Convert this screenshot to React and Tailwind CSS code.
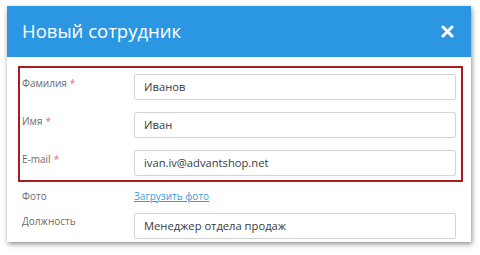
import React from "react";

const font = { fontFamily: '"Open Sans", "Noto Sans", sans-serif' };

function Row({ label, value, req }) {
  return (
    <div className="flex items-start h-[26px]">
      <div className="w-[114px] pl-[2px] pt-[1px] text-[10px] text-[#6b6b6b] leading-[16px]">
        {label}
        {req && <span className="text-[#e0707a] ml-[3px]">*</span>}
      </div>
      <div className="flex-1 h-[26px] border border-[#d4d4d4] rounded-[2px] flex items-center pl-[9px] text-[11.2px] text-[#3a3a3a]">
        {value}
      </div>
    </div>
  );
}

export default function App() {
  return (
    <div className="w-[480px] h-[255px] bg-white pt-[6px] pl-[7px]" style={font}>
      <div className="w-[464px] h-[236px] bg-white shadow-[1px_2px_5px_rgba(0,0,0,0.45)] flex flex-col">
        <div className="h-[51px] bg-[#2b97e2] flex items-center justify-between pl-[15px] pr-[17px]">
          <span className="text-white text-[18.5px] leading-none">Новый сотрудник</span>
          <svg width="13" height="13" viewBox="0 0 13 13">
            <path d="M2 2 L11 11 M11 2 L2 11" stroke="white" strokeWidth="3" strokeLinecap="round" />
          </svg>
        </div>
        <div className="pt-[9px] pl-[11px] pr-[8px]">
          <div className="border-2 border-[#a61b24] pt-[6px] pb-[4px] pr-[5px] flex flex-col gap-[12px]">
            <Row label="Фамилия" value="Иванов" req />
            <Row label="Имя" value="Иван" req />
            <Row label="E-mail" value="ivan.iv@advantshop.net" req />
          </div>
          <div className="flex items-center h-[28px] mt-[0px]">
            <div className="w-[116px] pl-[4px] text-[10px] text-[#6b6b6b]">Фото</div>
            <a className="text-[10px] text-[#3d9bd6] underline">Загрузить фото</a>
          </div>
          <div className="flex items-start mt-[3px] pr-[7px]">
            <div className="w-[116px] pl-[4px] pt-[1px] text-[10px] text-[#6b6b6b]">Должность</div>
            <div className="flex-1 h-[26px] border border-[#d4d4d4] rounded-[2px] flex items-center pl-[9px] text-[11.2px] text-[#3a3a3a]">
              Менеджер отдела продаж
            </div>
          </div>
        </div>
      </div>
    </div>
  );
}
